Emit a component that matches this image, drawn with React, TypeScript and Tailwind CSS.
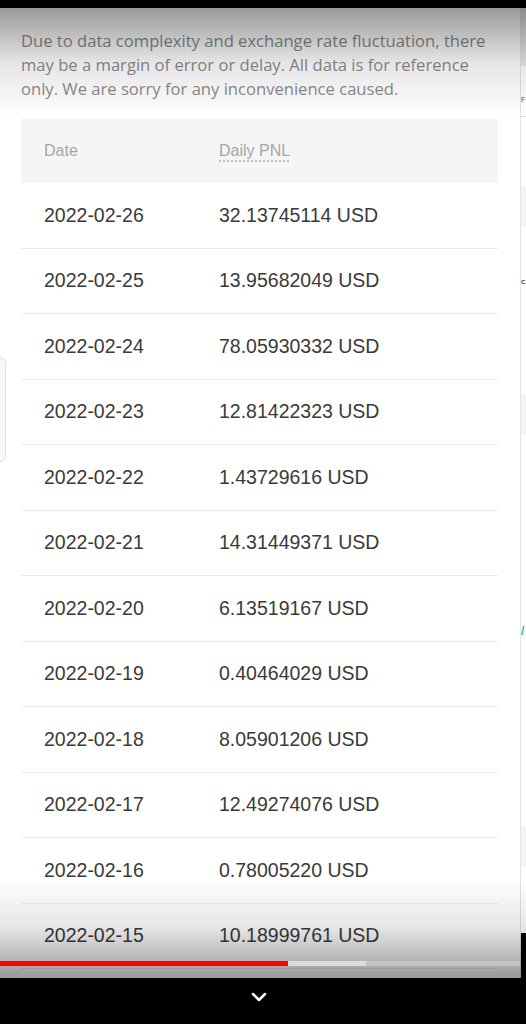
import React from "react";

const rows = [
  ["2022-02-26", "32.13745114 USD"],
  ["2022-02-25", "13.95682049 USD"],
  ["2022-02-24", "78.05930332 USD"],
  ["2022-02-23", "12.81422323 USD"],
  ["2022-02-22", "1.43729616 USD"],
  ["2022-02-21", "14.31449371 USD"],
  ["2022-02-20", "6.13519167 USD"],
  ["2022-02-19", "0.40464029 USD"],
  ["2022-02-18", "8.05901206 USD"],
  ["2022-02-17", "12.49274076 USD"],
  ["2022-02-16", "0.78005220 USD"],
  ["2022-02-15", "10.18999761 USD"],
];

export default function App() {
  return (
    <div className="w-[526px] h-[1024px] bg-black flex flex-col overflow-hidden font-['Liberation_Sans',Arial,sans-serif]">
      <div className="h-[8px] shrink-0" />

      <div className="relative h-[970px] shrink-0 bg-white flex overflow-hidden">
        <div className="w-[520px] shrink-0 pl-[21px] pr-[22px] pt-[21px]">
          <p className="w-[472px] text-[16.6px] leading-[24px] text-[#8c8c8c] font-['Open_Sans',sans-serif]">
            Due to data complexity and exchange rate fluctuation, there may be a margin of error or delay. All data is for
            reference only. We are sorry for any inconvenience caused.
          </p>

          <div className="mt-[18px]">
            <div className="h-[64px] bg-[#f5f5f5] flex items-center text-[16px] text-[#a6a6a6]">
              <div className="w-[198px] pl-[23px]">Date</div>
              <div className="underline decoration-dotted decoration-[#b5b5b5] underline-offset-[5px]">Daily PNL</div>
            </div>
            {rows.map(([d, v]) => (
              <div key={d} className="h-[65.5px] border-b border-[#ececec] flex items-center text-[19.5px] text-[#3a3a3a]">
                <div className="w-[198px] pl-[23px]">{d}</div>
                <div>{v}</div>
              </div>
            ))}
          </div>
        </div>

        {/* next panel peeking in at the right */}
        <div className="w-[6px] shrink-0 border-l border-[#e4e4e4] bg-white flex flex-col text-[7px] text-[#555]">
          <div className="h-[58px] bg-[#e9e9e9]" />
          <div className="h-[30px]" />
          <div className="leading-none">F</div>
          <div className="h-[14px] border-b border-[#ddd]" />
          <div className="h-[70px]" />
          <div className="h-[40px] bg-[#f2f4f7]" />
          <div className="h-[52px]" />
          <div className="leading-none font-bold text-[6px] text-[#333]">C</div>
          <div className="h-[110px]" />
          <div className="h-[40px] bg-[#f2f4f7]" />
          <div className="h-[190px]" />
          <div className="leading-none font-bold text-[12px] text-[#2ebd85]">/</div>
          <div className="h-[190px]" />
          <div className="h-[40px] bg-[#f2f4f7]" />
          <div className="flex-1" />
          <div className="h-[45px] bg-black" />
        </div>

        {/* left edge tab */}
        <div className="absolute left-[-8px] top-[349px] w-[14px] h-[105px] rounded-[6px] border border-[#dedede] bg-[#f8f8f8]" />

        {/* player shading */}
        <div className="absolute left-0 right-0 top-0 h-[110px] bg-linear-to-b from-black/40 via-black/10 to-transparent pointer-events-none" />
        <div className="absolute left-0 right-0 bottom-0 h-[100px] bg-linear-to-t from-black/40 via-black/10 to-transparent pointer-events-none" />

        {/* progress bar */}
        <div className="absolute left-0 w-[520px] bottom-[12px] h-[5px] flex bg-white/25">
          <div className="w-[288px] bg-[#ff0000]" />
          <div className="w-[78px] bg-[#dcdcdc]" />
        </div>
      </div>

      <div className="flex-1 flex items-center justify-center">
        <svg width="16" height="10" viewBox="0 0 16 10" className="mb-[8px] mr-[8px]">
          <polyline points="2,2 8,8 14,2" fill="none" stroke="white" strokeWidth="2.5" strokeLinecap="round" strokeLinejoin="round" />
        </svg>
      </div>
    </div>
  );
}
